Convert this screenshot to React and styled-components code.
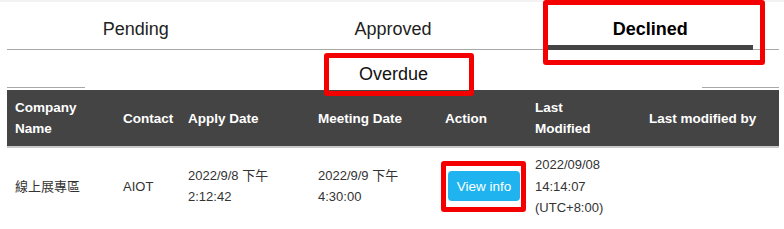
import React from "react";
import styled, { createGlobalStyle } from "styled-components";

const GlobalStyle = createGlobalStyle`
  html, body {
    margin: 0;
    padding: 0;
    background: #fff;
    font-family: "Liberation Sans", Arial, sans-serif;
    color: #222;
  }
`;

const TopStrip = styled.div`
  height: 2px;
  background: #f2f2f2;
`;

const Page = styled.div`
  padding: 0 5px 0 7px;
`;

const TabList = styled.div`
  display: flex;
  border-bottom: 1px solid #a8a8a8;
`;

const TabItem = styled.div`
  position: relative;
  flex: 1;
  display: flex;
  justify-content: center;
`;

const TabLink = styled.div`
  width: calc(100% - 52px);
  margin-bottom: -1px;
  padding: 16px 0 5px;
  text-align: center;
  font-size: 18px;
  line-height: 22px;
  font-weight: ${(p) => (p.$active ? 700 : 400)};
  color: ${(p) => (p.$active ? "#000" : "#222")};
  border-bottom: 5px solid ${(p) => (p.$active ? "#444" : "transparent")};
`;

const Highlight = styled.div`
  position: absolute;
  top: ${(p) => p.$top}px;
  right: ${(p) => p.$right}px;
  bottom: ${(p) => p.$bottom}px;
  left: ${(p) => p.$left}px;
  border: 5px solid #f50000;
  border-radius: 3px;
  pointer-events: none;
  z-index: 2;
`;

const SubNav = styled.div`
  display: flex;
  height: 38px;
`;

const LineSeg = styled.div`
  width: ${(p) => p.$w}px;
  align-self: flex-end;
  border-bottom: 1px solid #a8a8a8;
`;

const SubCenter = styled.div`
  flex: 1;
  display: flex;
  justify-content: center;
  padding-top: 13px;
`;

const SubLabel = styled.span`
  position: relative;
  display: inline-block;
  font-size: 18px;
  line-height: 22px;
  height: 22px;
  color: #111;
`;

const Table = styled.table`
  width: 100%;
  margin-top: 2px;
  border-collapse: collapse;
  table-layout: fixed;
`;

const HeadRow = styled.tr`
  background: #444;
  border-bottom: 2px solid #c9c9c9;
`;

const Th = styled.th`
  padding: 7px 8px;
  text-align: left;
  vertical-align: middle;
  color: #fff;
  font-size: 13.5px;
  line-height: 21px;
  font-weight: 700;
`;

const Td = styled.td`
  padding: 6px 8px;
  vertical-align: middle;
  font-size: 13px;
  line-height: 21.5px;
  color: #333;
  font-family: "Liberation Sans", Arial, "Noto Sans CJK TC", sans-serif;
`;

const ButtonWrap = styled.span`
  position: relative;
  display: inline-block;
  margin-left: 3px;
`;

const ViewButton = styled.button`
  display: block;
  width: 72px;
  height: 30px;
  padding: 0;
  border: none;
  border-radius: 4px;
  background: #1fb4ef;
  color: #fff;
  font-family: "Liberation Sans", Arial, sans-serif;
  font-size: 13.5px;
`;

const columns = [108, 65, 130, 127, 90, 114, 138];

export default function App() {
  return (
    <>
      <GlobalStyle />
      <TopStrip />
      <Page>
        <TabList>
          <TabItem>
            <TabLink>Pending</TabLink>
          </TabItem>
          <TabItem>
            <TabLink>Approved</TabLink>
          </TabItem>
          <TabItem>
            <TabLink $active>Declined</TabLink>
            <Highlight $top={-2} $right={14} $bottom={-16} $left={21} />
          </TabItem>
        </TabList>
        <SubNav>
          <LineSeg $w={78} />
          <SubCenter>
            <SubLabel>
              Overdue
              <Highlight $top={-10} $right={-46} $bottom={-11} $left={-35} />
            </SubLabel>
          </SubCenter>
          <LineSeg $w={77} />
        </SubNav>
        <Table>
          <colgroup>
            {columns.map((w, i) => (
              <col key={i} style={{ width: w }} />
            ))}
          </colgroup>
          <thead>
            <HeadRow>
              <Th>Company Name</Th>
              <Th>Contact</Th>
              <Th>Apply Date</Th>
              <Th>Meeting Date</Th>
              <Th>Action</Th>
              <Th>
                Last
                <br />
                Modified
              </Th>
              <Th>Last modified by</Th>
            </HeadRow>
          </thead>
          <tbody>
            <tr>
              <Td>線上展專區</Td>
              <Td>AIOT</Td>
              <Td>2022/9/8 下午 2:12:42</Td>
              <Td>2022/9/9 下午 4:30:00</Td>
              <Td>
                <ButtonWrap>
                  <ViewButton>View info</ViewButton>
                  <Highlight $top={-10} $right={-6} $bottom={-11} $left={-7} />
                </ButtonWrap>
              </Td>
              <Td>2022/09/08 14:14:07 (UTC+8:00)</Td>
              <Td></Td>
            </tr>
          </tbody>
        </Table>
      </Page>
    </>
  );
}
